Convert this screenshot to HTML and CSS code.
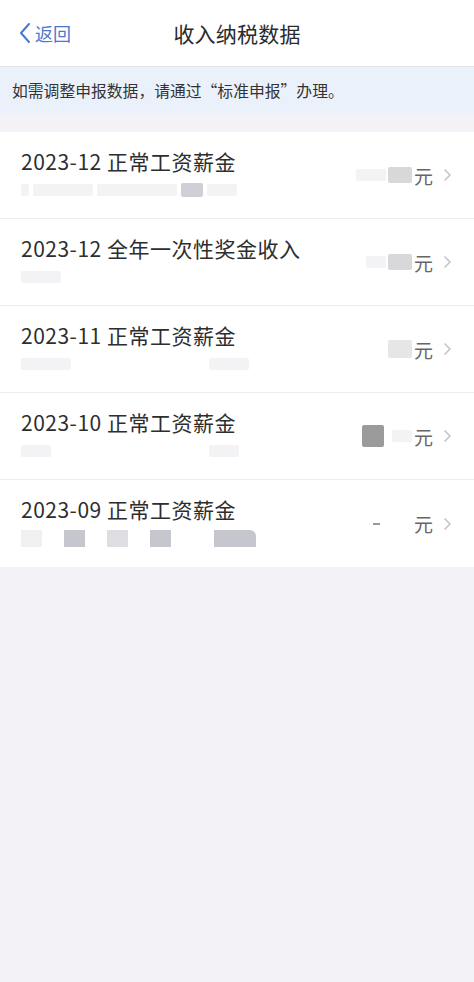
FILE: index.html
```html
<!DOCTYPE html>
<html lang="zh-CN">
<head>
  <meta charset="UTF-8">
  <meta name="viewport" content="width=device-width, initial-scale=1.0">
  <title>收入纳税数据</title>
  <link rel="stylesheet" href="styles.css">
</head>
<body>
  <!-- Navbar -->
  <div class="navbar">
    <a class="back" href="#">
      <svg width="12" height="22" viewBox="0 0 12 22"><path d="M10 2 L2 11 L10 20" fill="none" stroke="#4a78d0" stroke-width="2" stroke-linecap="round" stroke-linejoin="round"/></svg>
      <span>返回</span>
    </a>
    <h1>收入纳税数据</h1>
    <div></div>
  </div>

  <div class="notice">如需调整申报数据，请通过“标准申报”办理。</div>

  <ul class="income-list">
    <li class="row">
      <div class="info">
        <div class="name">2023-12 正常工资薪金</div>
        <div class="sub">
          <span class="blot faint w8"></span><span class="blot faint w60"></span><span class="blot faint w80"></span><span class="blot mid w22"></span><span class="blot faint w30"></span>
        </div>
      </div>
      <div class="amount">
        <span class="blot faint w30"></span><span class="blot light w24"></span><span class="unit">元</span>
        <svg class="chev" width="9" height="14" viewBox="0 0 9 14"><path d="M1.5 1.5 L7 7 L1.5 12.5" fill="none" stroke="#c4c4c8" stroke-width="1.5"/></svg>
      </div>
    </li>
    <li class="row">
      <div class="info">
        <div class="name">2023-12 全年一次性奖金收入</div>
        <div class="sub">
          <span class="blot faint w40"></span>
        </div>
      </div>
      <div class="amount">
        <span class="blot faint w20"></span><span class="blot light w24"></span><span class="unit">元</span>
        <svg class="chev" width="9" height="14" viewBox="0 0 9 14"><path d="M1.5 1.5 L7 7 L1.5 12.5" fill="none" stroke="#c4c4c8" stroke-width="1.5"/></svg>
      </div>
    </li>
    <li class="row">
      <div class="info">
        <div class="name">2023-11 正常工资薪金</div>
        <div class="sub">
          <span class="blot faint w50"></span><span class="blot gap w130"></span><span class="blot faint w40"></span>
        </div>
      </div>
      <div class="amount">
        <span class="blot pale w24"></span><span class="unit">元</span>
        <svg class="chev" width="9" height="14" viewBox="0 0 9 14"><path d="M1.5 1.5 L7 7 L1.5 12.5" fill="none" stroke="#c4c4c8" stroke-width="1.5"/></svg>
      </div>
    </li>
    <li class="row">
      <div class="info">
        <div class="name">2023-10 正常工资薪金</div>
        <div class="sub">
          <span class="blot faint w30"></span><span class="blot gap w150"></span><span class="blot faint w30"></span>
        </div>
      </div>
      <div class="amount">
        <span class="blot dark w22"></span><span class="blot faint w20"></span><span class="unit">元</span>
        <svg class="chev" width="9" height="14" viewBox="0 0 9 14"><path d="M1.5 1.5 L7 7 L1.5 12.5" fill="none" stroke="#c4c4c8" stroke-width="1.5"/></svg>
      </div>
    </li>
    <li class="row">
      <div class="info">
        <div class="name">2023-09 正常工资薪金</div>
        <div class="sub boxes">
          <span class="box faint"></span><span class="box mid"></span><span class="box light"></span><span class="box mid"></span><span class="box wide mid"></span>
        </div>
      </div>
      <div class="amount">
        <span class="dash"></span><span class="blot gap w30"></span><span class="unit">元</span>
        <svg class="chev" width="9" height="14" viewBox="0 0 9 14"><path d="M1.5 1.5 L7 7 L1.5 12.5" fill="none" stroke="#c4c4c8" stroke-width="1.5"/></svg>
      </div>
    </li>
  </ul>
</body>
</html>
```

FILE: styles.css
```css
body {
  font-family: "Noto Sans CJK SC", "Noto Sans", sans-serif;
  background-color: #f3f3f7;
  margin: 0;
  padding: 0;
  color: #333;
}

/* Navbar */
.navbar {
  height: 67px;
  background-color: #fff;
  border-bottom: 1px solid #e4e4e8;
  box-sizing: border-box;
  display: grid;
  grid-template-columns: 1fr auto 1fr;
  align-items: center;
}

.navbar h1 {
  margin: 0;
  font-size: 21px;
  font-weight: normal;
  color: #2b2b2b;
  letter-spacing: 0.2px;
}

.back {
  display: flex;
  align-items: center;
  gap: 4px;
  padding-left: 19px;
  color: #4a78d0;
  text-decoration: none;
  font-size: 18px;
  margin-top: -1px;
}

/* Notice */
.notice {
  height: 46px;
  background-color: #eaf1fb;
  display: flex;
  align-items: center;
  padding-left: 12px;
  font-size: 15.8px;
  color: #333;
  margin-bottom: 19px;
}

/* List */
.income-list {
  list-style: none;
  margin: 0;
  padding: 0;
  background-color: #fff;
}

.row {
  height: 87px;
  box-sizing: border-box;
  border-bottom: 1px solid #ececef;
  display: flex;
  justify-content: space-between;
  padding: 0 22px 0 21px;
}

.row:last-child {
  border-bottom: none;
}

.info {
  padding-top: 15px;
}

.name {
  font-size: 21px;
  line-height: 28px;
  color: #2e2e2e;
  letter-spacing: 0.5px;
}

.sub {
  margin-top: 6px;
  height: 18px;
  display: flex;
  align-items: center;
  gap: 4px;
}

.amount {
  display: flex;
  align-items: center;
  gap: 2px;
}

.unit {
  font-size: 19px;
  color: #666;
  margin-right: 8px;
}

.chev {
  display: block;
}

/* blurred/redacted marks */
.blot {
  display: inline-block;
  height: 12px;
  border-radius: 2px;
}

.faint { background-color: #f3f3f5; }
.light { background-color: #d8d8da; height: 16px; }
.pale { background-color: #e6e6e8; height: 18px; }
.mid { background-color: #cfcfd8; height: 14px; }
.dark { background-color: #9b9b9b; height: 22px; margin-right: 6px; }
.gap { background-color: transparent; }

.w8 { width: 8px; }
.w20 { width: 20px; }
.w22 { width: 22px; }
.w24 { width: 24px; }
.w30 { width: 30px; }
.w40 { width: 40px; }
.w50 { width: 50px; }
.w60 { width: 60px; }
.w80 { width: 80px; }
.w130 { width: 130px; }
.w150 { width: 150px; }

.boxes {
  gap: 22px;
}

.box {
  display: inline-block;
  width: 21px;
  height: 17px;
}

.box.mid { background-color: #c6c6cf; }
.box.light { background-color: #dedee2; }
.box.faint { background-color: #f0f0f2; }
.box.wide { width: 42px; margin-left: 21px; border-radius: 0 6px 0 0; }

.dash {
  display: inline-block;
  width: 7px;
  height: 2px;
  background-color: #999;
}
```
